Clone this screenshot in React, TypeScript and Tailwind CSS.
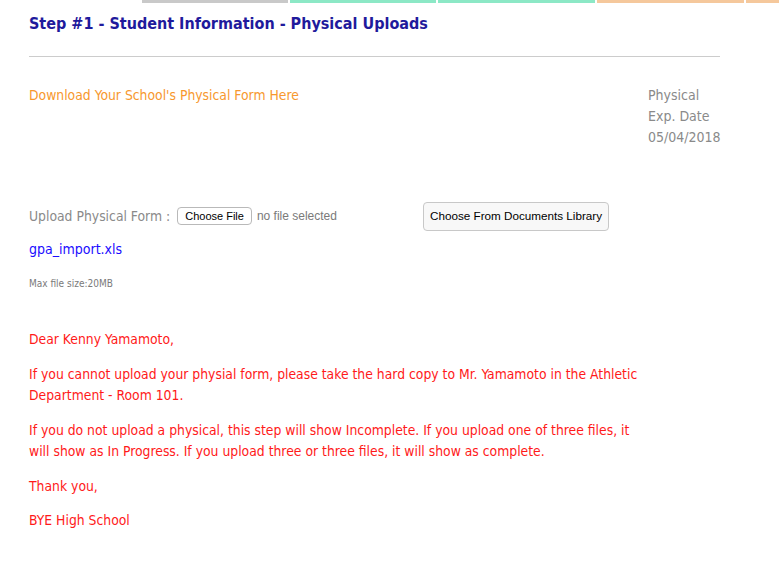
const tahoma = { fontFamily: '"DejaVu Sans Condensed", "DejaVu Sans", sans-serif' };
const arial = { fontFamily: '"Liberation Sans", Arial, sans-serif' };

function StepBar() {
  return (
    <div className="flex h-[3px] gap-[2px] pl-[142px]">
      <div className="w-[146px] bg-[#c9c9c9]" />
      <div className="w-[146px] bg-[#8ce8c6]" />
      <div className="w-[157px] bg-[#8ce8c6]" />
      <div className="w-[147px] bg-[#f5c89c]" />
      <div className="flex-1 bg-[#f5c89c]" />
    </div>
  );
}

export default function App() {
  return (
    <div className="w-[779px] h-[585px] bg-white overflow-hidden" style={tahoma}>
      <StepBar />
      <div className="pl-[29px] pr-[59px]">
        <h1 className="mt-[11px] text-[16px] leading-[20px] font-bold text-[#1f1a9c]">
          Step #1 - Student Information - Physical Uploads
        </h1>
        <hr className="mt-[22px] border-t border-[#cccccc]" />

        <div className="flex justify-between mt-[28px] text-[14px] leading-[21px]">
          <a className="text-[13.8px] text-[#f7982e]">Download Your School's Physical Form Here</a>
          <div className="w-[72px] text-[#8a8a8a]">
            <div>Physical</div>
            <div>Exp. Date</div>
            <div>05/04/2018</div>
          </div>
        </div>

        <div className="flex items-center mt-[53px] h-[30px]">
          <span className="text-[13.8px] text-[#8a8a8a]">Upload Physical Form :</span>
          <button
            className="ml-[7px] h-[18px] px-[7px] rounded-[4px] border border-[#b9b9b9] bg-white text-[11px] text-black leading-none"
            style={arial}
          >
            Choose File
          </button>
          <span className="ml-[5px] text-[12px] text-[#7a7a7a]" style={arial}>
            no file selected
          </span>
          <button
            className="ml-[86px] h-[29px] px-[6px] rounded-[4px] border border-[#c8c8c8] bg-[#f8f8f8] text-[11.7px] text-black"
            style={arial}
          >
            Choose From Documents Library
          </button>
        </div>

        <a className="block mt-[8px] text-[14px] leading-[20px] text-[#1a0dff]">gpa_import.xls</a>
        <div className="mt-[19px] text-[10px] leading-[12px] text-[#7a7a7a]">Max file size:20MB</div>

        <div className="mt-[39px] text-[13.8px] leading-[21px] text-[#ff1a1a] w-[620px]">
          <p>Dear Kenny Yamamoto,</p>
          <p className="mt-[14px]">
            If you cannot upload your physial form, please take the hard copy to Mr. Yamamoto in the Athletic
            Department - Room 101.
          </p>
          <p className="mt-[14px]">
            If you do not upload a physical, this step will show Incomplete. If you upload one of three files, it
            will show as In Progress. If you upload three or three files, it will show as complete.
          </p>
          <p className="mt-[14px]">Thank you,</p>
          <p className="mt-[13px]">BYE High School</p>
        </div>
      </div>
    </div>
  );
}
